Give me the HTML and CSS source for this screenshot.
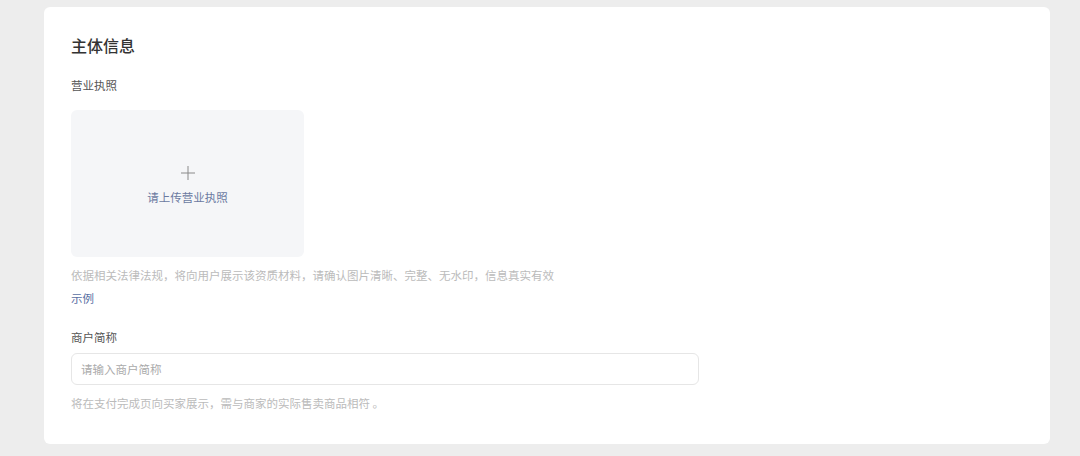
FILE: index.html
```html
<!DOCTYPE html>
<html lang="zh-CN">
<head>
<meta charset="utf-8">
<title>主体信息</title>
<link rel="stylesheet" href="styles.css">
</head>
<body>
<div class="card">
  <h2 class="title">主体信息</h2>
  <div class="label label-first">营业执照</div>
  <div class="upload">
    <svg class="plus" width="14" height="14" viewBox="0 0 14 14" aria-hidden="true">
      <path d="M7 0V14M0 7H14" stroke="#8a8a8a" stroke-width="1" fill="none"/>
    </svg>
    <div class="upload-text">请上传营业执照</div>
  </div>
  <div class="hint hint-upload">依据相关法律法规，将向用户展示该资质材料，请确认图片清晰、完整、无水印，信息真实有效</div>
  <div class="example">示例</div>
  <div class="label label-second">商户简称</div>
  <div class="input"><span class="placeholder">请输入商户简称</span></div>
  <div class="hint hint-input">将在支付完成页向买家展示，需与商家的实际售卖商品相符 。</div>
</div>
</body>
</html>
```

FILE: styles.css
```css
html, body {
  margin: 0;
  padding: 0;
}
body {
  background: #ededed;
  font-family: "Noto Sans CJK SC", "Noto Sans", sans-serif;
  height: 456px;
  overflow: hidden;
}
.card {
  margin: 7px 0 0 44px;
  width: 1006px;
  height: 437px;
  box-sizing: border-box;
  background: #fff;
  border-radius: 6px;
  padding: 27px 27px 0 27px;
  display: flex;
  flex-direction: column;
  align-items: flex-start;
}
.title {
  margin: 0;
  font-size: 16px;
  line-height: 22px;
  font-weight: 500;
  color: #333;
}
.label {
  font-size: 11.5px;
  line-height: 18px;
  color: #555;
}
.label-first {
  margin-top: 20px;
}
.label-second {
  margin-top: 21px;
}
.upload {
  margin-top: 16px;
  width: 233px;
  height: 147px;
  background: #f5f6f8;
  border-radius: 6px;
  display: flex;
  flex-direction: column;
  align-items: center;
  padding-top: 56px;
  box-sizing: border-box;
}
.plus {
  display: block;
}
.upload-text {
  margin-top: 8px;
  font-size: 11.5px;
  line-height: 18px;
  color: #6b7aa1;
}
.hint {
  font-size: 11.5px;
  line-height: 18px;
  color: #bbbbbb;
}
.hint-upload {
  margin-top: 9px;
}
.example {
  margin-top: 5px;
  font-size: 11.5px;
  line-height: 18px;
  color: #5a6fa3;
}
.input {
  margin-top: 7px;
  width: 628px;
  height: 32px;
  box-sizing: border-box;
  border: 1px solid #e6e6e6;
  border-radius: 6px;
  display: flex;
  align-items: center;
  padding-left: 9px;
}
.placeholder {
  font-size: 11.5px;
  color: #aaa;
}
.hint-input {
  margin-top: 9px;
}
```
